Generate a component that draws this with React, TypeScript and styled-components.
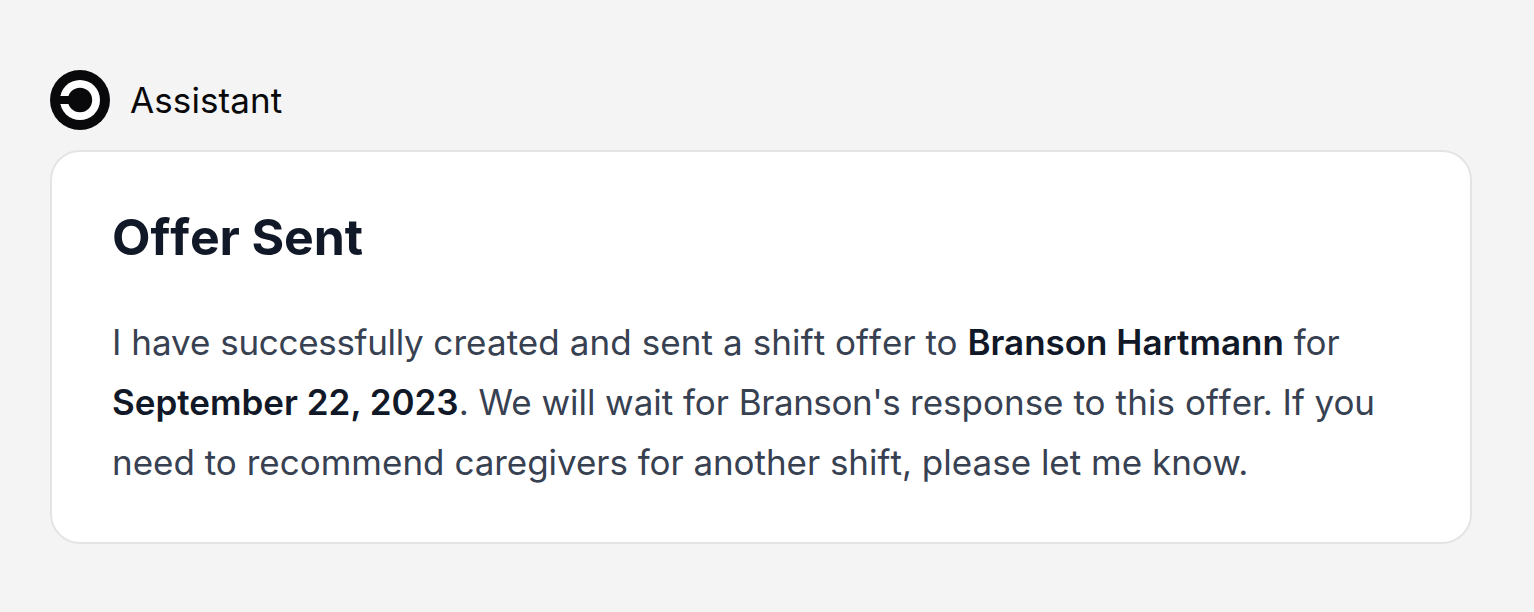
import React from "react";
import styled, { createGlobalStyle } from "styled-components";

const GlobalStyle = createGlobalStyle`
  *, *::before, *::after { box-sizing: border-box; }
  body {
    margin: 0;
    background: #f4f4f4;
    font-family: Inter, sans-serif;
  }
`;

const Page = styled.main`
  width: 1534px;
  min-height: 612px;
  padding: 70px 62px 68px 50px;
  background: #f4f4f4;
`;

const Header = styled.header`
  display: flex;
  align-items: center;
  gap: 20px;
  height: 60px;
  margin-bottom: 20px;
`;

const Logo = styled.svg`
  display: block;
  width: 60px;
  height: 60px;
`;

const Name = styled.span`
  font-size: 35px;
  line-height: 60px;
  letter-spacing: 0.1px;
  color: #09090b;
`;

const Card = styled.article`
  height: 394px;
  padding: 50px 60px;
  background: #ffffff;
  border: 2px solid #e4e4e4;
  border-radius: 30px;
`;

const Title = styled.h2`
  margin: 0 0 40px;
  font-size: 50px;
  font-weight: 700;
  line-height: 70px;
  letter-spacing: -0.15px;
  color: #111827;
`;

const Message = styled.p`
  margin: 0;
  font-size: 35px;
  line-height: 60px;
  color: #374151;
`;

const Strong = styled.strong`
  font-weight: 600;
  color: #111827;
`;

/* Letter pair set without kerning, so the crossbars stay apart. */
const OpenPair = styled.span`
  font-kerning: none;
`;

const Tracked = styled.span<{ $spacing: number }>`
  letter-spacing: ${({ $spacing }) => $spacing}px;
`;

export default function App() {
  return (
    <>
      <GlobalStyle />
      <Page>
        <Header>
          <Logo viewBox="0 0 60 60" aria-hidden="true">
            <circle cx="30" cy="30" r="30" fill="#09090b" />
            <circle cx="30" cy="30" r="20" fill="#fff" />
            <circle cx="30" cy="30" r="12.2" fill="#09090b" />
            <rect x="8" y="26" width="16" height="8" fill="#09090b" />
          </Logo>
          <Name>Assistant</Name>
        </Header>
        <Card>
          <Title>
            O<OpenPair>ff</OpenPair>er Sent
          </Title>
          <Message>
            I have <Tracked $spacing={-0.32}>successfully</Tracked>{" "}
            <Tracked $spacing={0.09}>
              created and sent a shi<OpenPair>ft</OpenPair>
            </Tracked>{" "}
            o<OpenPair>ff</OpenPair>er to{" "}
            <Strong>Branson Hartmann</Strong> for <Strong>September 22, 2023</Strong>.{" "}
            <Tracked $spacing={-0.04}>We will wait for </Tracked>
            <Tracked $spacing={-0.45}>Branson's</Tracked> response{" "}
            <Tracked $spacing={0.1}>to this </Tracked>
            <Tracked $spacing={-0.1}>
              o<OpenPair>ff</OpenPair>er. If you
            </Tracked>{" "}
            need to recommend <Tracked $spacing={-0.05}>caregivers for another </Tracked>shi
            <OpenPair>ft</OpenPair>, please let me know.
          </Message>
        </Card>
      </Page>
    </>
  );
}
